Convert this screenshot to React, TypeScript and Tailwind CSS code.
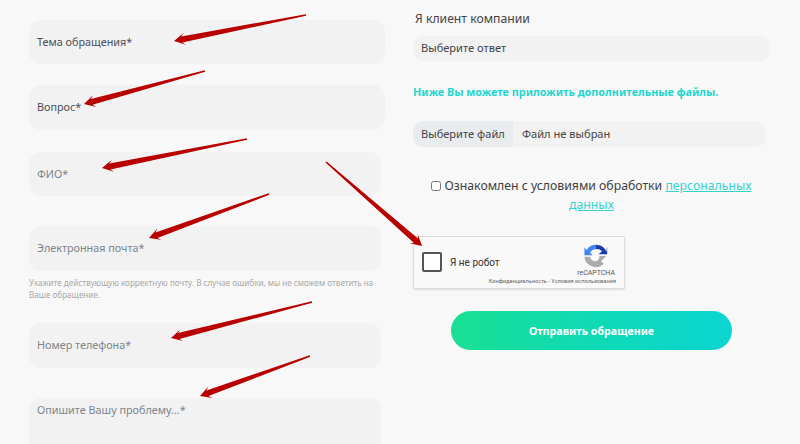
const arrows = [
  [306, 15, 174, 41],
  [205, 71, 84, 104],
  [247, 139, 102, 168],
  [269, 194, 149, 238],
  [312, 302, 171, 338],
  [310, 356, 200, 396],
  [326, 162, 422, 246],
];

// tapered annotation arrow, thin at the tail and thick at the head
function arrowPath([x1, y1, x2, y2]: number[]) {
  const len = Math.hypot(x2 - x1, y2 - y1);
  const ux = (x2 - x1) / len;
  const uy = (y2 - y1) / len;
  const nx = -uy;
  const ny = ux;
  const bx = x2 - ux * 8;
  const by = y2 - uy * 8;
  const bx2 = x2 - ux * 11;
  const by2 = y2 - uy * 11;
  const p = (x: number, y: number) => `${x.toFixed(1)} ${y.toFixed(1)}`;
  return `M${p(x1 + nx * 0.8, y1 + ny * 0.8)} L${p(bx + nx * 3, by + ny * 3)} L${p(bx2 + nx * 6, by2 + ny * 6)} L${p(x2, y2)} L${p(bx2 - nx * 6, by2 - ny * 6)} L${p(bx - nx * 3, by - ny * 3)} L${p(x1 - nx * 0.8, y1 - ny * 0.8)} Z`;
}

function Field({ label, className = "", dark = false }: { label: string; className?: string; dark?: boolean }) {
  return (
    <div className={`flex items-center rounded-[12px] bg-[#f2f2f2] pl-[8px] text-[10.8px] ${dark ? "text-[#4a4f55]" : "text-[#7d858c]"} ${className}`}>
      {label}
    </div>
  );
}

function RecaptchaLogo() {
  return (
    <svg width="24" height="24" viewBox="0 0 28 28" className="block">
      <path d="M14 1 A13 13 0 0 1 26 9 L27 3 L27 12 L17 12 L21 8.500 A8 8 0 0 0 14 6 Z" fill="#1c3aa9" />
      <path d="M14 1 A13 13 0 0 0 3 7 L0.500 4 L0.500 13 L10 13 L7 10 A8 8 0 0 1 14 6 Z" fill="#4285f4" />
      <path d="M0.500 15 A13 13 0 0 0 14 27 A13 13 0 0 0 23 23 L20 20 L26 14 L18 14 A6 6 0 0 1 14 20 A6 6 0 0 1 7 15 Z" fill="#ababab" />
    </svg>
  );
}

export default function App() {
  return (
    <div className="relative h-[444px] w-[800px] overflow-hidden bg-[#f8f8f8] font-['Noto_Sans',sans-serif]">
      <div className="flex">
        <div className="flex w-[413px] flex-col pl-[29px] pt-[20px]">
          <Field label="Тема обращения*" dark className="h-[44px] w-[356px]" />
          <Field label="Вопрос*" dark className="mt-[21px] h-[45px] w-[356px]" />
          <Field label="ФИО*" className="mt-[22px] h-[44px] w-[352px]" />
          <Field label="Электронная почта*" className="mt-[30px] h-[45px] w-[352px]" />
          <p className="mt-[6px] w-[352px] text-[8.1px] leading-[12px] text-[#a9a9a9]">
            Укажите действующую корректную почту. В случае ошибки, мы не сможем ответить на Ваше обращение.
          </p>
          <Field label="Номер телефона*" className="mt-[22px] h-[45px] w-[352px]" />
          <div className="mt-[30px] h-[60px] w-[352px] rounded-[12px] bg-[#f2f2f2] pl-[8px] pt-[4px] text-[10.8px] text-[#7d858c]">
            Опишите Вашу проблему...*
          </div>
        </div>

        <div className="flex w-[387px] flex-col">
          <div className="mt-[10px] h-[18px] pl-[2px] text-[12.2px] leading-[18px] text-[#444444]">Я клиент компании</div>
          <div className="mt-[8px] flex h-[25px] w-[357px] items-center rounded-[10px] bg-[#f2f2f2] pl-[8px] text-[11.100px] text-[#444444]">
            Выберите ответ
          </div>
          <div className="mt-[23px] h-[16px] text-[10.850px] font-bold leading-[16px] text-[#1ed6d0]">
            Ниже Вы можете приложить дополнительные файлы.
          </div>
          <div className="mt-[21px] flex h-[26px] w-[353px] overflow-hidden rounded-[10px] bg-[#f2f2f2] text-[11.100px] text-[#444444]">
            <div className="flex w-[100px] items-center bg-[#e9ecef] pl-[8px]">Выберите файл</div>
            <div className="flex items-center pl-[9px]">Файл не выбран</div>
          </div>
          <div className="mt-[29px] w-[357px] text-center text-[12.250px] leading-[19px] text-[#3f3f3f]">
            <input type="checkbox" readOnly className="mr-[3px] h-[10px] w-[10px] align-[-1px]" />
            Ознакомлен с условиями обработки <span className="text-[#35d3d0] underline">персональных данных</span>
          </div>
          <div className="mt-[22px] flex h-[53px] w-[212px] flex-col rounded-[2px] border border-[#dcdcdc] bg-[#f9f9f9] shadow-[0_1px_2px_rgba(0,0,0,0.12)]">
            <div className="flex flex-1 items-start">
              <div className="ml-[8px] mt-[15px] h-[20px] w-[20px] rounded-[2px] border-2 border-[#555555] bg-white" />
              <div className="ml-[8px] mt-[19px] font-['Roboto',sans-serif] text-[10px] leading-[14px] text-[#333333]">Я не робот</div>
              <div className="ml-auto mr-[9px] mt-[7px] flex flex-col items-center">
                <RecaptchaLogo />
                <div className="mt-[1px] font-['Roboto',sans-serif] text-[7px] leading-[9px] text-[#555555]">reCAPTCHA</div>
              </div>
            </div>
            <div className="mb-[3px] mr-[8px] text-right font-['Roboto',sans-serif] text-[5.650px] leading-[7px] text-[#666666]">
              Конфиденциальность - Условия использования
            </div>
          </div>
          <div className="ml-[38px] mt-[22px] flex h-[39px] w-[281px] items-center justify-center rounded-[20px] bg-gradient-to-r from-[#1adf93] to-[#0bd4d2] pt-[2px] text-[10.700px] font-bold text-white">
            Отправить обращение
          </div>
        </div>
      </div>

      <svg className="absolute left-0 top-0" width="800" height="444" viewBox="0 0 800 444">
        {arrows.map((a) => (
          <path key={a.join("-")} d={arrowPath(a)} fill="#b80000" />
        ))}
      </svg>
    </div>
  );
}
